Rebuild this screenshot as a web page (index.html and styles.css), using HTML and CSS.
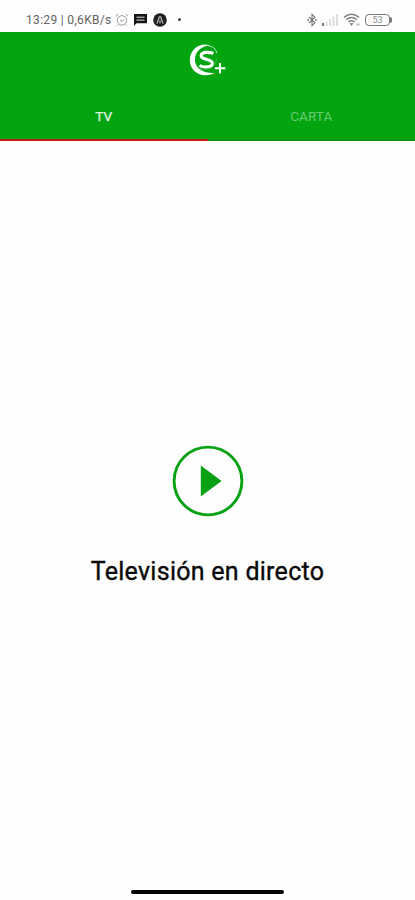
FILE: index.html
```html
<!DOCTYPE html>
<html lang="es">
<head>
<meta charset="utf-8">
<meta name="viewport" content="width=device-width, initial-scale=1">
<title>Televisión en directo</title>
<link rel="stylesheet" href="styles.css">
</head>
<body>
<div class="app">
  <div class="status">
    <div class="status-left">
      <span class="status-text">13:29 | 0,6KB/s</span>
      <svg class="alarm" width="14" height="14" viewBox="0 0 14 14" fill="none" stroke="#999"><circle cx="7" cy="7.4" r="4.7"/><path d="M1 3.3 3.4 1.2M13 3.3 10.6 1.2M3.4 11.5 2.3 12.8M10.6 11.5l1.1 1.3M5 7l2 1.5L9 6.3"/></svg>
      <svg class="message" width="13" height="12" viewBox="0 0 13 12"><path d="M0 0h13v9.3H2.4L0 12z" fill="#171717"/><path d="M2.5 3.2h8M2.5 6.1h8" stroke="#ddd" stroke-width="1"/></svg>
      <svg class="badge" width="14" height="14" viewBox="0 0 14 14"><circle cx="7" cy="7" r="6.8" fill="#202020"/><path d="M4 10.5 6.3 3.8h1.4L10 10.5M7 7.2v3" fill="none" stroke="#bbb" stroke-width="1.2"/></svg>
      <span class="dot"></span>
    </div>
    <div class="status-right">
      <svg class="bluetooth" width="10" height="14" viewBox="0 0 10 14" fill="none" stroke="#777" stroke-width="1.1"><path d="M2 4l6 5.8L5 12.7V1.3l3 2.9L2 10"/><path d="M.2 7h1.8M8 7h1.8" stroke-width="1.6"/></svg>
      <svg class="signal" width="16" height="12" viewBox="0 0 16 12"><path d="M0 9h2v3H0z" fill="#777"/><path d="M3.5 7.5h2V12h-2zM7 5h2v7H7zM10.5 2.5h2V12h-2zM14 0h2v12h-2z" fill="#ddd"/></svg>
      <svg class="wifi" width="18" height="14" viewBox="0 0 18 14" fill="none" stroke="#808080" stroke-width="1.5"><path d="M1 4.3q7.5-6 15 0M3.2 6.7q5.3-4.2 10.6 0M5.4 9q3.1-2.4 6.2 0"/><path d="M6.4 10.3h4.2l-2.1 2.4z" fill="#777" stroke="none"/><path d="M13.5 11.5h3" stroke="#bbb" stroke-width="2"/></svg>
      <span class="battery"><span>53</span></span>
    </div>
  </div>
  <header class="header">
    <svg class="logo" width="38" height="34" viewBox="0 0 38 34" fill="none" stroke="#fff">
      <path d="M22 1.2C11-1.6 1.8 6 1.8 16.2 1.8 27.5 14 35.5 27.5 28.8 17.5 30 8 25.5 7 17 6 8.5 13 2 22 1.2z" fill="#fff" stroke="none"/>
      <path d="M20 1.7c4.8.6 8 3.2 8.8 7.4" stroke-width="1" opacity=".75"/>
      <path d="M28.5 14.5c-.4 6.2-5 10.8-11 10.8-2.4 0-4.2-.6-5.8-1.6" stroke-width=".7" opacity=".35"/>
      <path d="M25.4 9.5c-4-1.7-11.9-1.9-12.3 2.1-.4 4.6 11.5 3.1 11.3 7.6-.2 4.2-8.6 4.7-12.9 2.3" stroke-width="3.1"/>
      <path d="M32 18.9v10.6M26.8 24.2h10.6" stroke-width="1.9"/>
    </svg>
    <nav class="tabs">
      <div class="tab active">TV</div>
      <div class="tab">CARTA</div>
    </nav>
  </header>
  <main class="content">
    <svg class="play" width="72" height="72" viewBox="0 0 72 72"><circle cx="36" cy="36" r="33.9" fill="none" stroke="#07a214" stroke-width="2.9"/><path d="M28.8 20.4v31.2L49.6 36z" fill="#07a214"/></svg>
    <h1 class="title">Televisión en directo</h1>
  </main>
  <footer class="footer"><div class="handle"></div></footer>
</div>
</body>
</html>
```
FILE: styles.css
```css
* { box-sizing: border-box; }
body { margin: 0; background: #fefefe; font-family: Roboto, "Liberation Sans", sans-serif; }
.app { height: 900px; display: flex; flex-direction: column; overflow: hidden; }
.status { height: 32px; padding: 7px 25px 0 26px; display: flex; justify-content: space-between; flex: none; }
.status-left, .status-right { display: flex; align-items: center; height: 25px; }
.status-text { font-size: 12px; letter-spacing: .32px; color: #626262; white-space: nowrap; width: 89px; }
.message { margin-left: 5px; margin-top: 1px; }
.badge { margin-left: 6px; }
.dot { width: 3px; height: 3px; border-radius: 50%; background: #444; margin-left: 11px; }
.signal { margin-left: 5px; }
.wifi { margin-left: 5px; }
.battery { position: relative; margin-left: 4px; width: 25px; height: 12px; border: 1.5px solid #777; border-radius: 4px; display: flex; align-items: center; justify-content: center; font-size: 9px; color: #888; }
.battery::after { content: ""; position: absolute; right: -3px; top: 2px; width: 2px; height: 6px; background: #777; border-radius: 0 2px 2px 0; }
.header { height: 109px; background: #02a410; flex: none; display: flex; flex-direction: column; align-items: center; }
.logo { margin: 12px 2px 0 0; flex: none; }
.tabs { width: 100%; flex: 1; margin-top: 15px; display: flex; }
.tab { flex: 1; display: flex; justify-content: center; align-items: center; font-size: 13.6px; color: #69cb70; border-bottom: 2px solid #029410; }
.tab.active { color: #e2f5e3; border-color: #c01c10; -webkit-text-stroke: .25px #e2f5e3; }
.content { flex: 1; display: flex; flex-direction: column; align-items: center; padding-top: 304px; }
.title { margin: 39px 0 0; font-size: 25px; line-height: 32px; font-weight: 400; letter-spacing: .27px; -webkit-text-stroke: .35px #090909; color: #090909; white-space: nowrap; }
.footer { height: 20px; flex: none; display: flex; justify-content: center; }
.handle { width: 153px; height: 4px; margin-top: 10px; border-radius: 2px; background: #050505; }
```
